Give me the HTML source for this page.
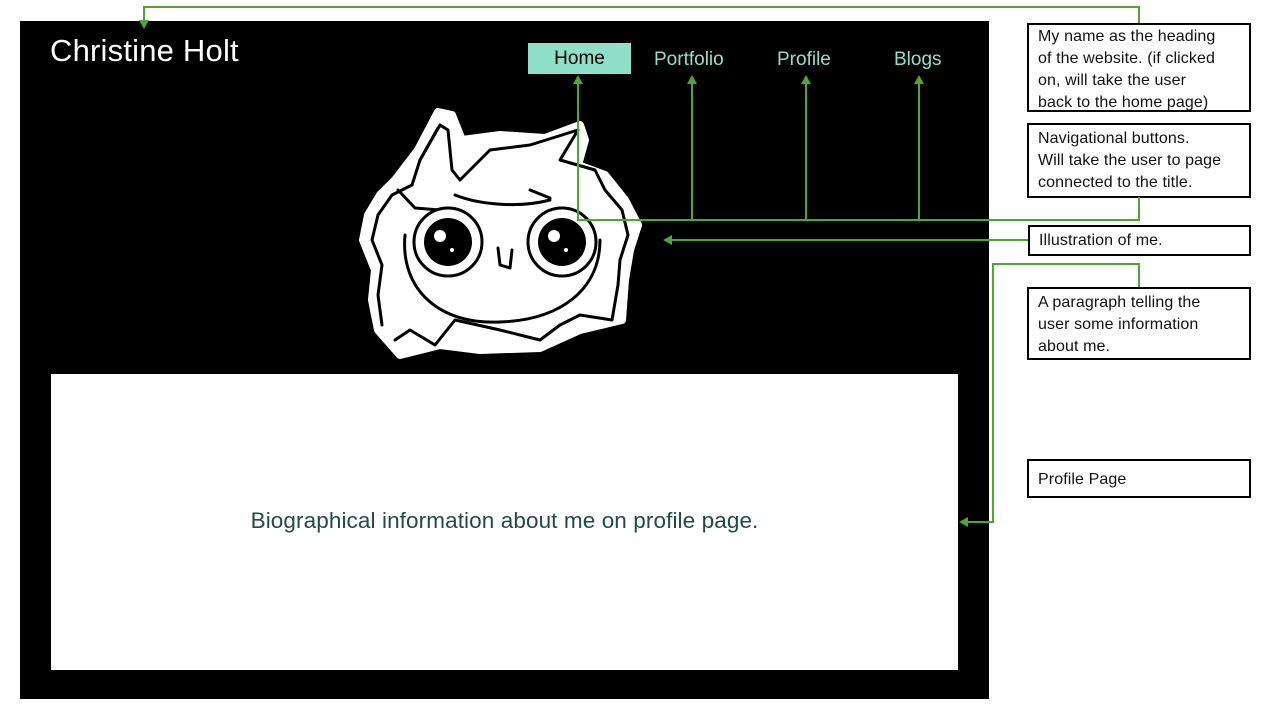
<!DOCTYPE html>
<html><head><meta charset="utf-8"><style>
*{margin:0;padding:0;box-sizing:border-box}
body{width:1280px;height:720px;background:#fff;position:relative;overflow:hidden;font-family:"Liberation Sans",sans-serif}
.panel{position:absolute;left:20px;top:21px;width:969px;height:678px;background:#000}
.white{position:absolute;left:51px;top:374px;width:907px;height:296px;background:#fff}
.h{position:absolute;left:50px;top:33px;color:#fff;font-size:31px;letter-spacing:0.2px}
.nav{position:absolute;top:49px;font-size:19px;color:#8fe0c8}
.home{position:absolute;left:528px;top:43px;width:103px;height:31px;background:#8fe0c8;color:#000;font-size:19px;text-align:center;line-height:31px}
.bio{position:absolute;left:51px;width:907px;top:508px;text-align:center;font-size:22.5px;letter-spacing:0.1px;color:#1f4d42}
.box{position:absolute;border:2px solid #000;background:#fff;font-size:16px;line-height:22px;padding:0 0 0 9px;color:#111;white-space:nowrap;letter-spacing:0.1px}
svg{position:absolute;left:0;top:0}
</style></head><body>
<div class="panel"></div>
<div class="white"></div>
<div class="h">Christine Holt</div>
<div class="home">Home</div>
<div class="nav" style="left:654px">Portfolio</div>
<div class="nav" style="left:777px">Profile</div>
<div class="nav" style="left:894px">Blogs</div>
<div class="bio">Biographical information about me on profile page.</div>
<div class="box" style="left:1027px;top:23px;width:224px;height:89px;padding-top:1px">My name as the heading<br>of the website. (if clicked<br>on, will take the user<br>back to the home page)</div>
<div class="box" style="left:1027px;top:123px;width:224px;height:75px;padding-top:3px">Navigational buttons.<br>Will take the user to page<br>connected to the title.</div>
<div class="box" style="left:1028px;top:225px;width:223px;height:31px;padding-top:3px">Illustration of me.</div>
<div class="box" style="left:1027px;top:287px;width:224px;height:73px;padding-top:3px">A paragraph telling the<br>user some information<br>about me.</div>
<div class="box" style="left:1027px;top:459px;width:224px;height:39px;padding-top:8px">Profile Page</div>
<svg width="1280" height="720">
<g>
<path d="M378,330 L372,300 L375,270 L363,240 L368,215 L380,195 L395,180 L418,150 L438,112 L452,115 L462,140 L500,135 L545,138 L580,125 L585,140 L578,165 L605,175 L625,200 L638,225 L630,250 L625,280 L622,320 L580,330 L540,348 L480,350 L440,345 L400,355 Z" fill="#fff" stroke="#fff" stroke-width="8" stroke-linejoin="round"/>
<g fill="none" stroke="#000" stroke-width="3" stroke-linecap="round" stroke-linejoin="round">
<path d="M382,325 L378,295 L382,265 L372,240 L378,215 L392,195 L412,185 L420,160 L440,125 L448,130 L452,170 L460,180 L490,150 L530,145 L578,130 L560,160 L595,170 L605,190 L622,210 L628,235 L620,260 L618,285 L612,320 L580,315 L560,325 L540,340 L500,330 L455,320 L435,345 L410,330 L395,340"/>
<path d="M420,160 L438,128 M398,190 L415,208 L440,210 M455,195 C480,205 520,208 550,200 M530,190 L550,198"/>
<path d="M405,235 C400,290 440,325 500,322 C560,320 600,290 600,240"/>
<path d="M498,248 L500,265 L510,268 L512,250"/>
</g>
<circle cx="448" cy="242" r="34" fill="#fff" stroke="#000" stroke-width="3"/>
<circle cx="448" cy="242" r="24" fill="#000"/>
<circle cx="440" cy="236" r="6" fill="#fff"/><circle cx="452" cy="250" r="2" fill="#fff"/>
<circle cx="562" cy="242" r="34" fill="#fff" stroke="#000" stroke-width="3"/>
<circle cx="562" cy="242" r="24" fill="#000"/>
<circle cx="554" cy="236" r="6" fill="#fff"/><circle cx="566" cy="250" r="2" fill="#fff"/>
</g>
<g stroke="#4ea72e" stroke-width="2" fill="none">
<path d="M144,24 V7 H1139 V23"/>
<path d="M1139,197 V220 H578 V82 M692,220 V82 M806,220 V82 M919,220 V82"/>
<path d="M1028,240 H670"/>
<path d="M1139,287 V264 H993 V522 H966"/>
</g>
<g fill="#4ea72e">
<path d="M139,20 L149,20 L144,29 Z"/>
<path d="M573,84 L583,84 L578,75 Z"/><path d="M687,84 L697,84 L692,75 Z"/><path d="M801,84 L811,84 L806,75 Z"/><path d="M914,84 L924,84 L919,75 Z"/>
<path d="M672,235 L672,245 L663,240 Z"/>
<path d="M968,517 L968,527 L959,522 Z"/>
</g>
</svg>
</body></html>
